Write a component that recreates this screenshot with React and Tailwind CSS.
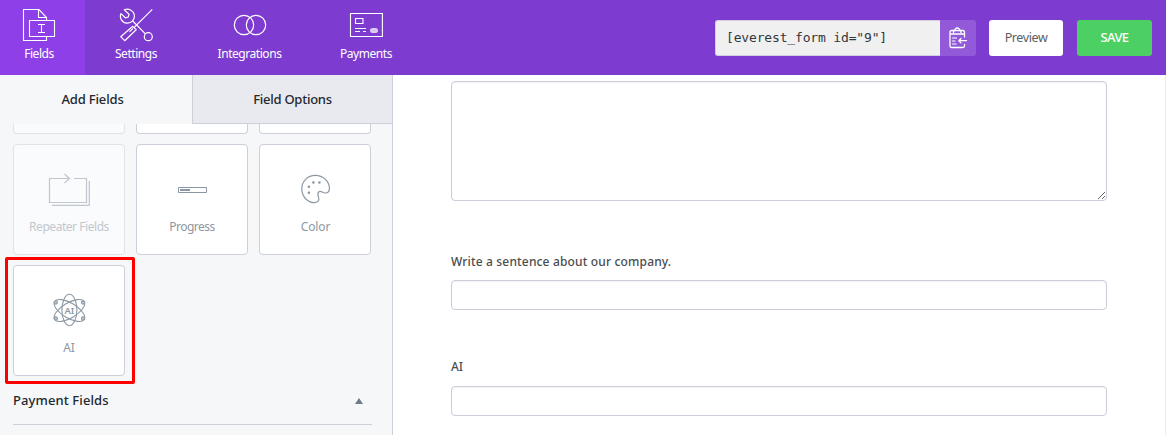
import React from "react";

const svgBase = { fill: "none", xmlns: "http://www.w3.org/2000/svg" };

function FieldsIcon() {
  return (
    <svg {...svgBase} width="34" height="34" viewBox="0 0 34 34" stroke="#fff" strokeWidth="1.1">
      <path d="M7.5 32.5H1.5V1.5H17L24.500 9.500V12.500M16.500 1.500V9.500H24.500M1.500 32.500H24.500V29" />
      <path d="M7.500 12.500H32.500V28.500H7.500Z" />
      <path d="M16 16.500H23M19.500 16.500V24.500M16 24.500H23" />
    </svg>
  );
}

function SettingsIcon() {
  return (
    <svg {...svgBase} width="34" height="34" viewBox="0 0 34 34" stroke="#fff" strokeWidth="1.2" strokeLinejoin="round">
      <path d="M33.300 1.300L15 19.600" />
      <path d="M13.800 18.300L17.200 21.700L5.700 32.700L1.700 28.700Z" />
      <path d="M10.500 23.800L14 20.300" />
      <path d="M5.300 1.900L10 6.200L9.300 9L6.300 9.800L1.900 5.600A7 7 0 1 0 5.300 1.900Z" />
      <path d="M13.700 13L26.400 25.800" />
      <circle cx="29.300" cy="28.700" r="4" />
    </svg>
  );
}

function IntegrationsIcon() {
  return (
    <svg {...svgBase} width="34" height="34" viewBox="0 0 34 34" stroke="#fff" strokeWidth="1.2">
      <circle cx="11" cy="17" r="9.700" />
      <circle cx="23" cy="17" r="9.700" />
    </svg>
  );
}

function PaymentsIcon() {
  return (
    <svg {...svgBase} width="34" height="34" viewBox="0 0 34 34" stroke="#fff" strokeWidth="1.1">
      <path d="M1.500 5.500H33.400V28.500H1.500Z" />
      <path d="M6.500 10.500H14V15.500H6.500Z" />
      <path d="M6 20.500H17M6 23.500H11M14 23.500H17" />
      <rect x="21" y="20" width="8" height="5" rx="2.500" fill="#fff" fillOpacity="0.75" stroke="none" />
      <path d="M22.500 22.500H27.500" stroke="#c9aeee" strokeWidth="1" strokeDasharray="1 1" />
    </svg>
  );
}

function ClipboardIcon() {
  return (
    <svg {...svgBase} width="20" height="22" viewBox="0 0 20 22" stroke="#fff" strokeWidth="1.3" strokeLinecap="round" strokeLinejoin="round">
      <path d="M16.500 10V5Q16.500 3.500 15 3.500H3.500Q2 3.500 2 5V19Q2 20.500 3.500 20.500H15Q16.500 20.500 16.500 19V17.500" />
      <path d="M2.500 7H16M5.500 5.500V3.500H7Q7 1 9.300 1T11.500 3.500H13V5.500" />
      <path d="M4.500 11H8.500M4.500 14H7M4.500 17H8" strokeWidth="1.200" />
      <path d="M18.500 13.700H10.800M13 11.500L10.800 13.700L13 15.900" />
    </svg>
  );
}

function RepeaterIcon() {
  return (
    <svg {...svgBase} width="42" height="34" viewBox="0 0 42 34" stroke="#8c96a5" strokeWidth="1.200">
      <path d="M21 6.500H1.500V30.500H38.500V6.500H26M16.500 2L21.500 6.500L16.500 11" />
      <path d="M4 33.400H41.300V9" />
    </svg>
  );
}

function ProgressIcon() {
  return (
    <svg {...svgBase} width="30" height="34" viewBox="0 0 30 34">
      <path d="M1.500 15.500H29.500V20.500H1.500Z" stroke="#8c96a5" />
      <path d="M3 18H13" stroke="#8c96a5" strokeWidth="2" />
    </svg>
  );
}

function ColorIcon() {
  return (
    <svg {...svgBase} width="30" height="34" viewBox="0 0 30 34" stroke="#8c98a4" strokeWidth="1.200">
      <g transform="translate(0.400 0.700)">
        <path d="M15 2.700C7 2.700 1.400 8.700 1.400 16.300C1.400 24 7.500 30 14 30C17 30 19 28 18.300 25.500C17.500 22.500 16.500 20.500 18.500 19C20.500 17.500 22 20.300 25 20.300C27.500 20.300 29 18.500 29 15.500C29 8.500 22.500 2.700 15 2.700Z" />
        <g fill="#8c98a4" stroke="none">
          <circle cx="13" cy="9.800" r="1.300" />
          <circle cx="19" cy="9.800" r="1.300" />
          <circle cx="8.500" cy="14" r="1.300" />
          <circle cx="8.500" cy="20" r="1.300" />
        </g>
      </g>
    </svg>
  );
}

function AiIcon() {
  return (
    <svg {...svgBase} width="34" height="34" viewBox="0 0 34 34" stroke="#8c98a4" strokeWidth="1.100">
      <g transform="translate(0.400 0)">
        <ellipse cx="17" cy="17" rx="7.500" ry="15.700" />
        <ellipse cx="17" cy="17.500" rx="7.500" ry="17.300" transform="rotate(59 17 17.500)" />
        <ellipse cx="17" cy="17.500" rx="7.500" ry="17.300" transform="rotate(-59 17 17.500)" />
        <g fill="#c4cad1">
          <circle cx="3.400" cy="9.500" r="1.600" />
          <circle cx="30.600" cy="9.500" r="1.600" />
          <circle cx="3.400" cy="25.500" r="1.600" />
          <circle cx="30.600" cy="25.500" r="1.600" />
        </g>
        <text x="17" y="20.700" textAnchor="middle" fontSize="9.500" fontWeight="600" fill="#8c98a4" stroke="none" fontFamily="Noto Sans, sans-serif">AI</text>
      </g>
    </svg>
  );
}

function NavTab({ icon, label, className }) {
  return (
    <div className={`flex h-[75px] shrink-0 flex-col items-center pt-2 text-[12px] leading-[18px] tracking-[-0.45px] text-white ${className}`}>
      {icon}
      <span className="mt-[3px] whitespace-nowrap">{label}</span>
    </div>
  );
}

function Card({ icon, label, className = "", labelClass = "" }) {
  return (
    <div className={`flex h-[111px] w-[112px] flex-col items-center rounded-[4px] border border-[#cdd0d8] bg-white pt-[27px] text-[12px] leading-[18px] text-[#8d979f] ${className}`}>
      <div className="flex h-[34px] items-center">{icon}</div>
      <span className={`mt-[12px] whitespace-nowrap ${labelClass}`}>{label}</span>
    </div>
  );
}

function TextInput() {
  return <input className="block h-[30px] w-full rounded-[4px] border border-[#cdcdd9] bg-white shadow-[inset_0_1px_2px_rgba(0,0,0,0.05)] outline-none" />;
}

export default function App() {
  return (
    <div className="flex h-[435px] w-[1166px] flex-col overflow-hidden bg-white font-['Noto_Sans',sans-serif]">
      <header className="flex h-[75px] shrink-0 bg-[#7e3bd0]">
        <nav className="flex">
          <NavTab icon={<FieldsIcon />} label="Fields" className="w-[85px] bg-[#8f3fe8] pr-[7px]" />
          <NavTab icon={<SettingsIcon />} label="Settings" className="w-[102px]" />
          <NavTab icon={<IntegrationsIcon />} label="Integrations" className="w-[125px]" />
          <NavTab icon={<PaymentsIcon />} label="Payments" className="w-[108px]" />
        </nav>
        <div className="ml-auto flex pt-5 pr-[14px]">
          <div className="flex h-9 w-[225px] items-center rounded-l-[3px] border border-r-0 border-[#d4cede] bg-[#f0f0f0] pl-[10px] font-['DejaVu_Sans_Mono',monospace] text-[13px] tracking-[-0.16px] text-[#32373c]">
            [everest_form id="9"]
          </div>
          <button className="flex h-9 w-9 items-center justify-center rounded-r-[3px] bg-[#925ad8]">
            <ClipboardIcon />
          </button>
          <button className="ml-[13px] h-9 w-[74px] rounded-[3px] bg-white text-[12.5px] tracking-[-0.4px] text-[#5a5d63]">Preview</button>
          <button className="ml-[14px] h-9 w-[75px] rounded-[3px] bg-[#4ccf63] text-[13px] font-medium tracking-[-0.6px] text-white">SAVE</button>
        </div>
      </header>
      <div className="flex min-h-0 flex-1">
        <aside className="flex w-[393px] shrink-0 flex-col border-r border-[#cdd0d8] bg-[#f5f7f9]">
          <div className="grid h-[49px] shrink-0 grid-cols-[192px_200px] text-center text-[13px] font-medium leading-[48px] text-[#23282d]">
            <div className="pr-[7px]"><span className="tracking-[-0.15px]">Add Fields</span></div>
            <div className="border-b border-l border-[#cdd0d8] bg-[#e9eaef]"><span className="tracking-[-0.25px]">Field Options</span></div>
          </div>
          <div className="flex min-h-0 flex-1 flex-col overflow-hidden pl-[13px]">
            <div className="mb-[10px] grid grid-cols-[112px_112px_112px] gap-x-[11px]">
              <div className="h-[10px] rounded-b-[4px] border border-t-0 border-[#cdd0d8] bg-white opacity-50" />
              <div className="h-[10px] rounded-b-[4px] border border-t-0 border-[#cdd0d8] bg-white" />
              <div className="h-[10px] rounded-b-[4px] border border-t-0 border-[#cdd0d8] bg-white" />
            </div>
            <div className="grid grid-cols-[112px_112px_112px] gap-x-[11px] gap-y-[10px]">
              <Card icon={<RepeaterIcon />} label="Repeater Fields" className="opacity-50" labelClass="tracking-[-0.45px]" />
              <Card icon={<ProgressIcon />} label="Progress" labelClass="tracking-[-0.5px]" />
              <Card icon={<ColorIcon />} label="Color" labelClass="tracking-[-0.1px] pl-px" />
              <div className="relative">
                <Card icon={<AiIcon />} label="AI" />
                <div className="pointer-events-none absolute -top-2 -left-2 h-[127px] w-[130px] rounded-[2px] border-3 border-[#ff0000]" />
              </div>
            </div>
            <div className="mt-px flex h-[48px] w-[359px] shrink-0 items-center justify-between border-b border-[#cdd0d8] pr-[9px] text-[13px] font-medium text-[#23282d]">
              <span className="tracking-[0.1px]">Payment Fields</span>
              <svg width="8" height="6" viewBox="0 0 8 6"><path d="M4 0L8 6H0Z" fill="#737b87" /></svg>
            </div>
          </div>
        </aside>
        <main className="flex flex-1 flex-col border-r border-[#ececec] pl-[58px] pr-[58px] pt-[6px] text-[12px] font-medium leading-[18px] text-[#494d50]">
          <textarea className="block h-[120px] w-full resize shrink-0 rounded-[4px] border border-[#cdcdd9] bg-white shadow-[inset_0_1px_2px_rgba(0,0,0,0.05)] outline-none" />
          <label className="mt-[52px] mb-[9px]"><span className="tracking-[0.16px]">Write a sentence about our company.</span></label>
          <TextInput />
          <label className="mt-[48px] mb-[10px]"><span>AI</span></label>
          <TextInput />
        </main>
      </div>
    </div>
  );
}
